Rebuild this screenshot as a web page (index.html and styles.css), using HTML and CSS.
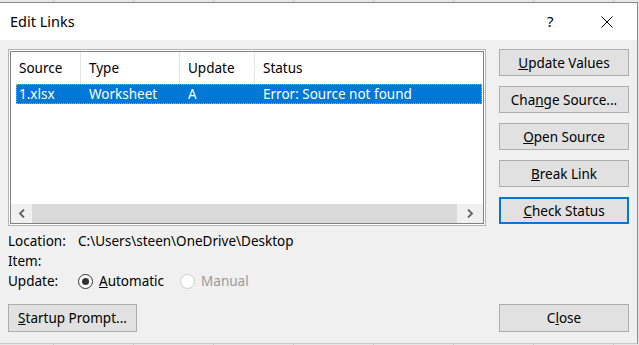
FILE: index.html
```html
<!DOCTYPE html>
<html>
<head>
<meta charset="utf-8">
<link rel="stylesheet" href="styles.css">
</head>
<body>
<div class="dialog">
  <div class="titlebar">
    <span class="title">Edit Links</span>
    <span class="help">?</span>
    <span class="close-x">
      <svg width="12" height="12" viewBox="0 0 12 12"><path d="M0.5 0.5 L11.5 11.5 M11.5 0.5 L0.5 11.5" stroke="#000" stroke-width="1" fill="none"/></svg>
    </span>
  </div>
  <div class="content">
    <div class="top">
      <div class="listbox">
        <div class="inner">
          <div class="list-area">
            <div class="row header">
              <div class="c c1">Source</div>
              <div class="c c2">Type</div>
              <div class="c c3">Update</div>
              <div class="c c4">Status</div>
            </div>
            <div class="row selected">
              <div class="c c1">1.xlsx</div>
              <div class="c c2">Worksheet</div>
              <div class="c c3">A</div>
              <div class="c c4">Error: Source not found</div>
            </div>
          </div>
          <div class="hscroll">
            <div class="arrow">
              <svg width="8" height="9" viewBox="0 0 8 9"><path d="M6 0.5 L2 4.5 L6 8.5" stroke="#606060" stroke-width="1.8" fill="none"/></svg>
            </div>
            <div class="thumb"></div>
            <div class="arrow right">
              <svg width="8" height="9" viewBox="0 0 8 9"><path d="M2 0.5 L6 4.5 L2 8.5" stroke="#606060" stroke-width="1.8" fill="none"/></svg>
            </div>
          </div>
        </div>
      </div>
      <div class="buttons">
        <button class="btn"><u>U</u>pdate Values</button>
        <button class="btn">Cha<u>n</u>ge Source...</button>
        <button class="btn"><u>O</u>pen Source</button>
        <button class="btn"><u>B</u>reak Link</button>
        <button class="btn default"><u>C</u>heck Status</button>
      </div>
    </div>
    <div class="info">
      <div class="info-row"><span class="label">Location:</span><span>C:\Users\steen\OneDrive\Desktop</span></div>
      <div class="info-row"><span class="label">Item:</span><span></span></div>
      <div class="info-row">
        <span class="label">Update:</span>
        <span class="radio checked"></span><span class="radio-label"><u>A</u>utomatic</span>
        <span class="radio disabled"></span><span class="radio-label disabled">Manual</span>
      </div>
    </div>
    <div class="bottom">
      <button class="btn wide"><u>S</u>tartup Prompt...</button>
      <button class="btn">C<u>l</u>ose</button>
    </div>
  </div>
</div>
</body>
</html>
```
FILE: styles.css
```css
html, body {
  margin: 0;
  padding: 0;
}
body {
  width: 639px;
  height: 345px;
  overflow: hidden;
  background-color: #e6e6e6;
  background-image: repeating-linear-gradient(to right, transparent 0, transparent 53px, #c8c8c8 53px, #c8c8c8 54px, transparent 54px, transparent 80px);
  background-position: 0 0;
  font-family: "Noto Sans", "Open Sans", sans-serif;
  font-size: 13.5px;
  color: #000;
}
.dialog {
  margin-top: 2px;
  width: 637px;
  height: 340px;
  background: #f0f0f0;
  border-top: 1px solid #8a8a8a;
  border-right: 1px solid #8a8a8a;
  border-bottom: 1px solid #c8c8c8;
  display: flex;
  flex-direction: column;
}
.titlebar {
  height: 37px;
  background: #fff;
  display: flex;
  align-items: center;
  flex-shrink: 0;
}
.title {
  font-size: 14.5px;
  margin-left: 10px;
  flex: 1;
  padding-bottom: 2px;
}
.help {
  font-size: 15px;
  width: 14px;
  margin-right: 40px;
  padding-bottom: 2px;
}
.close-x {
  display: flex;
  margin-right: 24px;
}
.content {
  padding: 9px 8px 0 8px;
  display: flex;
  flex-direction: column;
}
.top {
  display: flex;
  gap: 13px;
}
.listbox {
  width: 478px;
  height: 177px;
  box-sizing: border-box;
  border: 1px solid #b4b4b4;
  padding: 1px;
  background: #fff;
}
.inner {
  height: 100%;
  box-sizing: border-box;
  border: 1px solid #828282;
  display: flex;
  flex-direction: column;
}
.list-area {
  flex: 1;
  background: #fff;
}
.row {
  display: flex;
  align-items: center;
}
.header {
  height: 32px;
}
.header .c {
  height: 32px;
  line-height: 32px;
}
.header .c1, .header .c2, .header .c3 {
  border-right: 1px solid #e5e5e5;
}
.c {
  box-sizing: border-box;
  padding-left: 8px;
  white-space: nowrap;
}
.c1 { width: 70px; }
.c2 { width: 99px; }
.c3 { width: 75px; }
.c4 { width: 160px; }
.selected .c1 { width: 65px; padding-left: 3px; }
.selected {
  margin-left: 5px;
  height: 20px;
  background: #0078d7;
  color: #fff;
  outline: 1px dotted #e0a040;
  outline-offset: -1px;
  margin-right: 1px;
}
.selected .c4 { flex: 1; }
.hscroll {
  height: 19px;
  display: flex;
  background: #f0f0f0;
}
.arrow {
  width: 21px;
  display: flex;
  align-items: center;
  justify-content: center;
}
.arrow.right {
  width: 26px;
}
.thumb {
  flex: 1;
  background: #dadada;
}
.buttons {
  display: flex;
  flex-direction: column;
  gap: 10px;
  width: 130px;
}
.btn {
  font-family: "Noto Sans", "Open Sans", sans-serif;
  font-size: 13.5px;
  color: #000;
  background: #e1e1e1;
  border: 1px solid #adadad;
  height: 27px;
  width: 130px;
  padding: 0;
  margin: 0;
  box-sizing: border-box;
}
.btn.default {
  border: 2px solid #0078d7;
}
.btn.wide {
  width: 129px;
  height: 28px;
}
.bottom .btn {
  height: 28px;
}
.info {
  margin-top: 5px;
  display: flex;
  flex-direction: column;
}
.info-row {
  height: 20px;
  display: flex;
  align-items: center;
}
.label {
  width: 70px;
}
.radio {
  width: 15px;
  height: 15px;
  border-radius: 50%;
  border: 1px solid #333;
  background: #fff;
  box-sizing: border-box;
  display: flex;
  align-items: center;
  justify-content: center;
  margin-right: 6px;
}
.radio.checked::after {
  content: "";
  width: 7px;
  height: 7px;
  border-radius: 50%;
  background: #333;
}
.radio.disabled {
  border-color: #cccccc;
  margin-left: 16px;
}
.radio-label.disabled {
  color: #9a9a9a;
}
.bottom {
  margin-top: 13px;
  display: flex;
  justify-content: space-between;
}
```
